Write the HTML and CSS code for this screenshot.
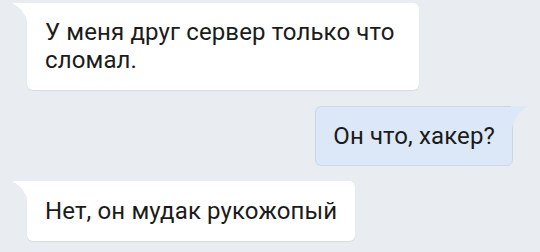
FILE: index.html
```html
<!DOCTYPE html>
<html lang="ru">
<head>
<meta charset="utf-8">
<link rel="stylesheet" href="styles.css">
</head>
<body>
<div class="chat">
  <div class="msg in first">У меня друг сервер только что сломал.</div>
  <div class="msg out">Он что, хакер?</div>
  <div class="msg in last">Нет, он мудак рукожопый</div>
</div>
</body>
</html>
```
FILE: styles.css
```css
html, body {
  margin: 0;
  padding: 0;
  background: #e9edf1;
}
body {
  width: 540px;
  height: 252px;
  overflow: hidden;
  font-family: Roboto, "Noto Sans", sans-serif;
}
.chat {
  display: flex;
  flex-direction: column;
  align-items: flex-start;
  padding-top: 3px;
  gap: 16px;
}
.msg {
  position: relative;
  box-sizing: border-box;
  font-size: 24px;
  line-height: 28px;
  letter-spacing: 0.12px;
  color: #1b1b1b;
  padding: 16px 18px;
  border-radius: 6px;
}
.in {
  background: #ffffff;
  margin-left: 27px;
  border-top-left-radius: 0;
  box-shadow: 0 1px 1px rgba(0, 0, 0, 0.08);
}
.in::before {
  content: "";
  position: absolute;
  left: -15px;
  top: 0;
  width: 16px;
  height: 20px;
  background: #ffffff;
  clip-path: path('M0 0 H16 V20 Q12 6 0 0 Z');
}
.first {
  width: 392px;
  padding-top: 15px;
  padding-bottom: 16px;
}
.out {
  align-self: flex-end;
  margin-right: 27px;
  background: #dce8f7;
  border: 1px solid #c9d7e8;
  border-top-right-radius: 0;
  padding: 15px 17px;
}
.out::before {
  content: "";
  position: absolute;
  right: -16px;
  top: -1px;
  width: 17px;
  height: 22px;
  background: #dce8f7;
  clip-path: path('M0 0 H17 Q4 8 1 22 H0 Z');
}
.last {
  margin-top: -1px;
}
```
